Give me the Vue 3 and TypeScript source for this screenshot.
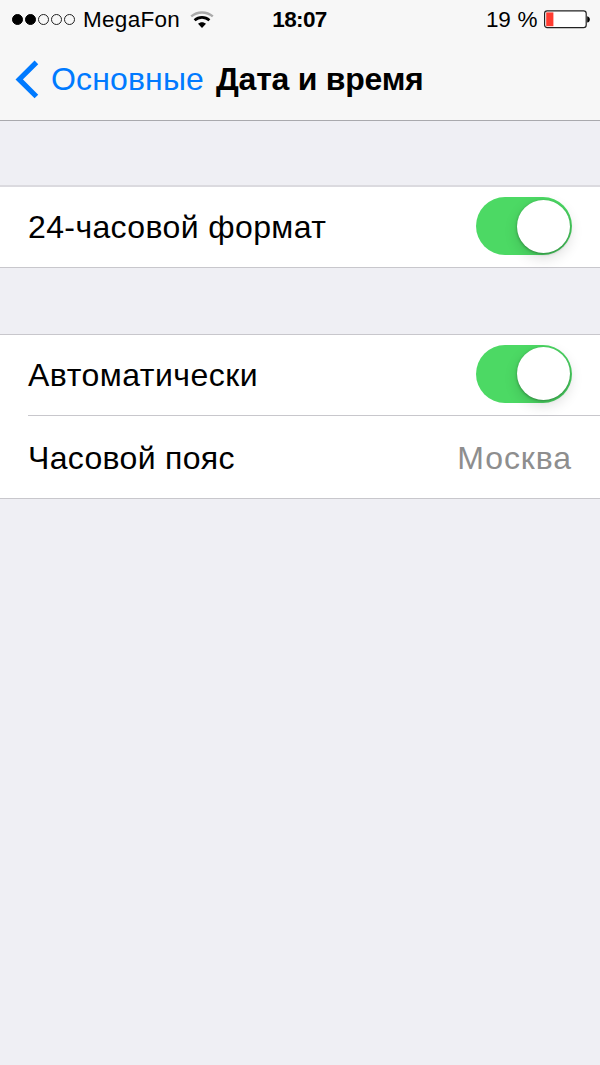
<script setup lang="ts">
import { ref } from 'vue'

interface Row {
  id: string
  label: string
  value?: string
  toggle?: boolean
}

const groups = ref<Row[][]>([
  [{ id: 'format', label: '24-часовой формат', toggle: true }],
  [
    { id: 'auto', label: 'Автоматически', toggle: true },
    { id: 'zone', label: 'Часовой пояс', value: 'Москва' },
  ],
])
const signal = [true, true, false, false, false]
</script>

<template>
  <main class="screen">
    <header class="top">
      <div class="status">
        <div class="carrier">
          <span class="dots">
            <i v-for="(on, i) in signal" :key="i" class="dot" :class="{ on }"></i>
          </span>
          <span class="name">MegaFon</span>
          <svg class="wifi" width="24" height="18" viewBox="0 0 24 18" fill="none">
            <path d="M1.2 5.4C7.4 .1 16.6 .1 22.8 5.4" stroke="#aaa" stroke-width="2.4" />
            <path d="M4.6 9.3C8.9 5.4 15.1 5.4 19.4 9.3" stroke="#000" stroke-width="2.7" />
            <path d="M8 12.8C10.2 10.6 13.8 10.6 16 12.8L12 16.9Z" fill="#000" />
          </svg>
        </div>
        <span class="time">18:07</span>
        <div class="power">
          <span class="percent">19 %</span>
          <svg class="battery" width="46" height="19" viewBox="0 0 46 19">
            <rect x=".6" y=".9" width="41.6" height="16.8" rx="2.6" fill="#fff" stroke="#222" stroke-width="1.2" />
            <rect x="2.2" y="2.4" width="7.2" height="13.8" fill="#ff3b30" />
            <path d="M43.2 6.3C46.7 7 46.7 11.8 43.2 12.5Z" fill="#000" />
          </svg>
        </div>
      </div>
      <nav class="nav">
        <svg class="chevron" width="24" height="39" viewBox="0 0 24 39" fill="none">
          <path d="M21.4 2.3L4.2 19.4L21.4 36.5" stroke="#007aff" stroke-width="5.2" />
        </svg>
        <span class="back">Основные</span>
        <h1 class="title">Дата и время</h1>
      </nav>
    </header>
    <section v-for="(rows, g) in groups" :key="g" class="group" :class="'group-' + g">
      <div v-for="row in rows" :key="row.id" class="row" :class="row.id">
        <span class="label">{{ row.label }}</span>
        <button
          v-if="row.toggle !== undefined"
          class="switch"
          :class="{ off: !row.toggle }"
          :aria-label="row.label"
          @click="row.toggle = !row.toggle"
        >
          <span class="knob"></span>
        </button>
        <span v-else class="value">{{ row.value }}</span>
      </div>
    </section>
  </main>
</template>

<style>
body {
  margin: 0;
  background: #efeff4;
}
</style>

<style scoped>
.screen {
  width: 600px;
  height: 1065px;
  overflow: hidden;
  background: #efeff4;
  color: #000;
  font-family: "Liberation Sans", Arial, sans-serif;
  font-size: 32px;
}
.top {
  box-sizing: border-box;
  height: 121px;
  background: #f7f7f7;
  border-bottom: 1px solid #a9a9ad;
}
.status {
  display: grid;
  grid-template-columns: 1fr auto 1fr;
  height: 39px;
  align-items: center;
  padding: 0 10px 0 12px;
  font-size: 22.5px;
  line-height: 39px;
}
.carrier,
.power {
  display: flex;
  align-items: center;
}
.power {
  justify-content: flex-end;
}
.dots {
  display: flex;
  gap: 2px;
}
.dot {
  box-sizing: border-box;
  width: 11px;
  height: 11px;
  border: 1px solid #222;
  border-radius: 50%;
}
.dot.on {
  background: #000;
  border-color: #000;
}
.name {
  margin-left: 8px;
  letter-spacing: 0.3px;
}
.wifi {
  margin-left: 10px;
}
.time {
  margin-right: 3px;
  font-weight: 700;
  letter-spacing: -0.6px;
}
.percent {
  margin-right: 7px;
  letter-spacing: -0.4px;
  word-spacing: 1.2px;
}
.nav {
  display: flex;
  align-items: center;
  height: 81px;
  padding-left: 15px;
}
.chevron {
  margin-top: -1px;
}
.back {
  margin-left: 12px;
  color: #007aff;
  letter-spacing: 0.15px;
}
.title {
  margin: 0 0 0 12px;
  font-size: 32px;
  font-weight: 700;
  letter-spacing: -0.25px;
}
.group {
  box-sizing: border-box;
  background: #fff;
  border-top: 1px solid #c8c7cc;
  border-bottom: 1px solid #c8c7cc;
}
.group-0 {
  height: 83px;
  margin-top: 64px;
  border-top: 2px solid #dbdadf;
}
.group-1 {
  height: 165px;
  margin-top: 66px;
}
.row {
  box-sizing: border-box;
  display: flex;
  align-items: center;
  justify-content: space-between;
  height: 80px;
  margin-left: 28px;
  padding: 0 28px 2px 0;
}
.format .label {
  letter-spacing: 0.38px;
}
.auto {
  padding-bottom: 3px;
}
.auto .label {
  letter-spacing: 0.5px;
}
.zone {
  height: 83px;
  padding-bottom: 0;
  border-top: 1px solid #c8c7cc;
}
.zone .label {
  letter-spacing: 0.32px;
}
.label,
.value {
  line-height: 36px;
  padding-top: 2px;
}
.value {
  color: #8e8e8e;
  letter-spacing: 0.9px;
}
.switch {
  box-sizing: border-box;
  display: flex;
  justify-content: flex-end;
  width: 96px;
  height: 58px;
  padding: 2.5px;
  border: 0;
  border-radius: 29px;
  background: #4cd964;
}
.switch.off {
  justify-content: flex-start;
  background: #e5e5ea;
}
.knob {
  width: 53px;
  height: 53px;
  border-radius: 50%;
  background: #fff;
  box-shadow: 0 5px 14px rgba(0, 0, 0, 0.14), 0 1px 3px rgba(0, 0, 0, 0.32);
}
</style>
